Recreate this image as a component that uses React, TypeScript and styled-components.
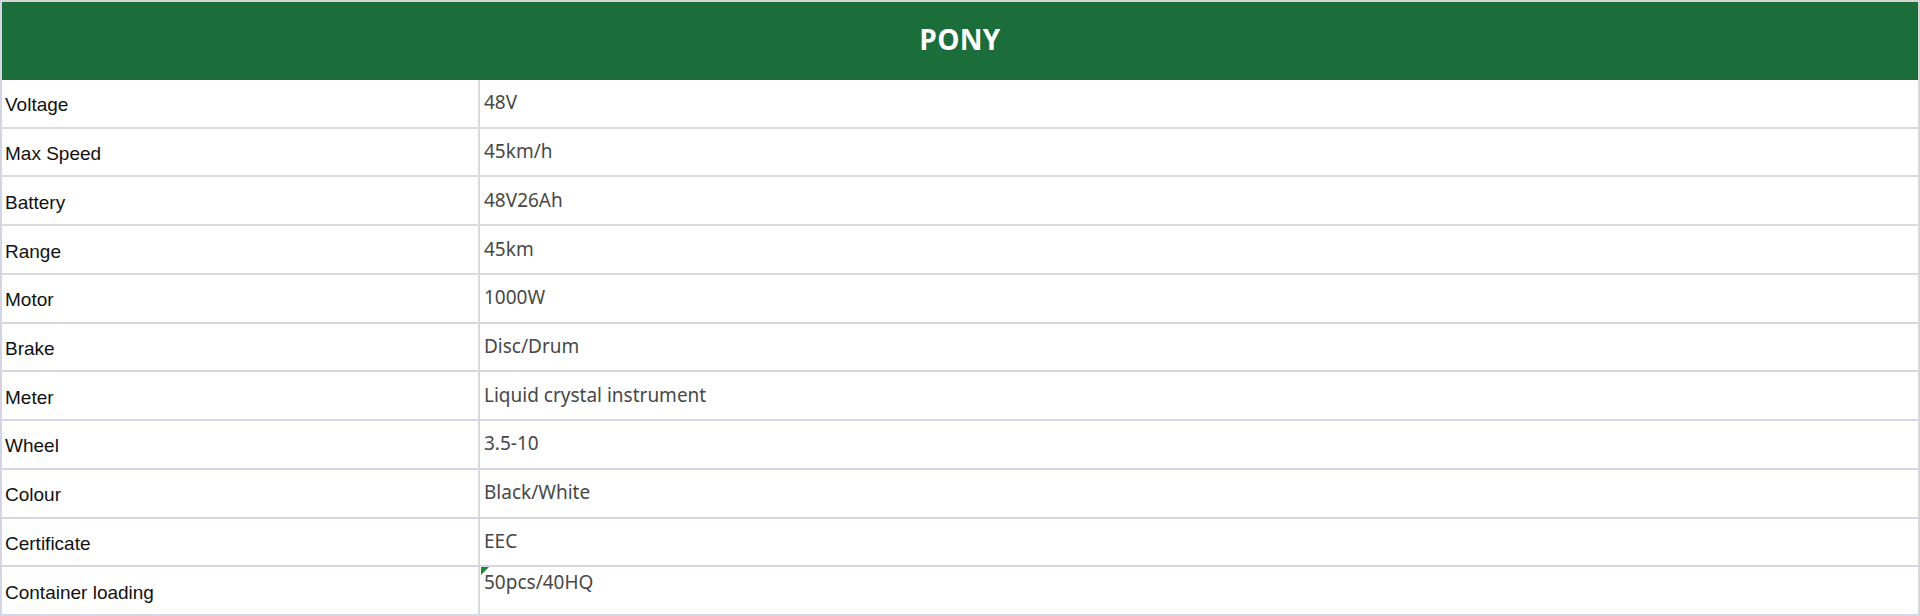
import React from "react";
import styled, { createGlobalStyle } from "styled-components";

const Global = createGlobalStyle`
  html, body { margin: 0; padding: 0; background: #ffffff; }
  #root { width: 1920px; }
`;

const Table = styled.div`
  box-sizing: border-box;
  width: 1920px;
  height: 616px;
  display: grid;
  grid-template-rows: 78px repeat(11, 1fr);
  border-top: 2px solid #d6d6d6;
  border-left: 2px solid #d4d4e4;
  border-right: 2px solid #d8d8d8;
  background: #ffffff;
`;

const Header = styled.div`
  background: #1b6d3a;
  display: flex;
  align-items: center;
  justify-content: center;
  padding-bottom: 4px;
  box-sizing: border-box;
  color: #ffffff;
  font-family: "Open Sans", "Noto Sans", sans-serif;
  font-weight: 700;
  font-size: 28px;
  letter-spacing: 0.3px;
`;

const Row = styled.div<{ $lavender?: boolean }>`
  display: grid;
  grid-template-columns: 478px 1fr;
  border-bottom: 2px solid ${(p) => (p.$lavender ? "#d6d6e8" : "#dcdcdc")};
  min-height: 0;
`;

const Label = styled.div`
  display: flex;
  align-items: center;
  padding: 4px 0 0 3px;
  font-family: "Liberation Sans", Arial, sans-serif;
  font-size: 19px;
  color: #111111;
  border-right: 2px solid #dadada;
`;

const Value = styled.div<{ $top?: boolean }>`
  position: relative;
  display: flex;
  align-items: ${(p) => (p.$top ? "flex-start" : "center")};
  padding: ${(p) => (p.$top ? "2px 0 0 4px" : "0 0 2px 4px")};
  font-family: "Noto Sans", "Open Sans", sans-serif;
  font-size: 19px;
  color: #484848;
`;

const Marker = styled.span`
  position: absolute;
  left: 1px;
  top: 0;
  width: 0;
  height: 0;
  border-top: 8px solid #1a8a2a;
  border-right: 8px solid transparent;
`;

const rows: { label: string; value: string }[] = [
  { label: "Voltage", value: "48V" },
  { label: "Max Speed", value: "45km/h" },
  { label: "Battery", value: "48V26Ah" },
  { label: "Range", value: "45km" },
  { label: "Motor", value: "1000W" },
  { label: "Brake", value: "Disc/Drum" },
  { label: "Meter", value: "Liquid crystal instrument" },
  { label: "Wheel", value: "3.5-10" },
  { label: "Colour", value: "Black/White" },
  { label: "Certificate", value: "EEC" },
  { label: "Container loading", value: "50pcs/40HQ" },
];

export default function App() {
  return (
    <>
      <Global />
      <Table>
        <Header>PONY</Header>
        {rows.map((r, i) => {
          const last = i === rows.length - 1;
          return (
            <Row key={r.label} $lavender={i >= 4}>
              <Label>{r.label}</Label>
              <Value $top={last}>
                {last && <Marker />}
                {r.value}
              </Value>
            </Row>
          );
        })}
      </Table>
    </>
  );
}
